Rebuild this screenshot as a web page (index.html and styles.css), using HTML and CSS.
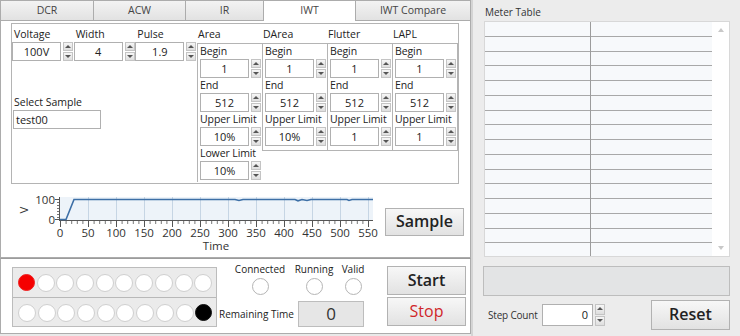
FILE: index.html
```html
<!DOCTYPE html>
<html>
<head>
<meta charset="UTF-8">
<link rel="stylesheet" href="styles.css">
</head>
<body>
<div class="app">
  <div class="left">
    <div class="tabs">
      <div class="tab t-dcr">DCR</div>
      <div class="tab t-acw">ACW</div>
      <div class="tab t-ir">IR</div>
      <div class="tab t-iwt active">IWT</div>
      <div class="tab t-cmp">IWT Compare</div>
    </div>
    <div class="page">
      <div class="params">
        <div class="basic">
          <div class="fields">
            <div class="field">
              <div class="lbl">Voltage</div>
              <div class="num"><div class="box">100V</div><div class="spin"><i class="up"></i><i class="dn"></i></div></div>
            </div>
            <div class="field">
              <div class="lbl">Width</div>
              <div class="num"><div class="box">4</div><div class="spin"><i class="up"></i><i class="dn"></i></div></div>
            </div>
            <div class="field">
              <div class="lbl">Pulse</div>
              <div class="num"><div class="box">1.9</div><div class="spin"><i class="up"></i><i class="dn"></i></div></div>
            </div>
          </div>
          <div class="sample">
            <div class="lbl">Select Sample</div>
            <div class="box text">test00</div>
          </div>
        </div>
        <div class="col col-area">
          <div class="head">Area</div>
          <div class="sub">
            <div class="grp"><div class="lbl">Begin</div><div class="num"><div class="box">1</div><div class="spin"><i class="up"></i><i class="dn"></i></div></div></div>
            <div class="grp"><div class="lbl">End</div><div class="num"><div class="box">512</div><div class="spin"><i class="up"></i><i class="dn"></i></div></div></div>
            <div class="grp"><div class="lbl">Upper Limit</div><div class="num"><div class="box">10%</div><div class="spin"><i class="up"></i><i class="dn"></i></div></div></div>
            <div class="grp"><div class="lbl">Lower Limit</div><div class="num"><div class="box">10%</div><div class="spin"><i class="up"></i><i class="dn"></i></div></div></div>
          </div>
        </div>
        <div class="col">
          <div class="head">DArea</div>
          <div class="sub">
            <div class="grp"><div class="lbl">Begin</div><div class="num"><div class="box">1</div><div class="spin"><i class="up"></i><i class="dn"></i></div></div></div>
            <div class="grp"><div class="lbl">End</div><div class="num"><div class="box">512</div><div class="spin"><i class="up"></i><i class="dn"></i></div></div></div>
            <div class="grp"><div class="lbl">Upper Limit</div><div class="num"><div class="box">10%</div><div class="spin"><i class="up"></i><i class="dn"></i></div></div></div>
          </div>
        </div>
        <div class="col">
          <div class="head">Flutter</div>
          <div class="sub">
            <div class="grp"><div class="lbl">Begin</div><div class="num"><div class="box">1</div><div class="spin"><i class="up"></i><i class="dn"></i></div></div></div>
            <div class="grp"><div class="lbl">End</div><div class="num"><div class="box">512</div><div class="spin"><i class="up"></i><i class="dn"></i></div></div></div>
            <div class="grp"><div class="lbl">Upper Limit</div><div class="num"><div class="box">1</div><div class="spin"><i class="up"></i><i class="dn"></i></div></div></div>
          </div>
        </div>
        <div class="col col-last">
          <div class="head">LAPL</div>
          <div class="sub">
            <div class="grp"><div class="lbl">Begin</div><div class="num"><div class="box">1</div><div class="spin"><i class="up"></i><i class="dn"></i></div></div></div>
            <div class="grp"><div class="lbl">End</div><div class="num"><div class="box">512</div><div class="spin"><i class="up"></i><i class="dn"></i></div></div></div>
            <div class="grp"><div class="lbl">Upper Limit</div><div class="num"><div class="box">1</div><div class="spin"><i class="up"></i><i class="dn"></i></div></div></div>
          </div>
        </div>
      </div>
      <div class="chart-row">
        <svg class="chart" width="369" height="68" viewBox="0 0 369 68">
          <rect x="45" y="9" width="313" height="23" fill="#edf3f9"/>
          <g stroke="#c6d5e4" stroke-width="1">
            <line x1="73.5" y1="9" x2="73.5" y2="32"/><line x1="101.5" y1="9" x2="101.5" y2="32"/>
            <line x1="129.5" y1="9" x2="129.5" y2="32"/><line x1="157.5" y1="9" x2="157.5" y2="32"/>
            <line x1="185.5" y1="9" x2="185.5" y2="32"/><line x1="213.5" y1="9" x2="213.5" y2="32"/>
            <line x1="241.5" y1="9" x2="241.5" y2="32"/><line x1="269.5" y1="9" x2="269.5" y2="32"/>
            <line x1="297.5" y1="9" x2="297.5" y2="32"/><line x1="325.5" y1="9" x2="325.5" y2="32"/>
            <line x1="353.5" y1="9" x2="353.5" y2="32"/>
          </g>
          <g stroke="#555" stroke-width="1">
            <line x1="44" y1="32.5" x2="358" y2="32.5"/>
            <line x1="44.5" y1="9" x2="44.5" y2="33"/>
            <line x1="40" y1="11.5" x2="44" y2="11.5"/>
            <line x1="40" y1="31.5" x2="44" y2="31.5"/>
          </g>
          <path d="M42 14.5h2M42 17.5h2M42 20.5h2M42 23.5h2M42 26.5h2M42 29.5h2" stroke="#777"/>
          <path stroke="#555" d="M45.5 33v6M73.5 33v6M101.5 33v6M129.5 33v6M157.5 33v6M185.5 33v6M213.5 33v6M241.5 33v6M269.5 33v6M297.5 33v6M325.5 33v6M353.5 33v6"/>
          <path stroke="#777" d="M51.1 33v3M56.7 33v3M62.3 33v3M67.9 33v3M79.1 33v3M84.7 33v3M90.3 33v3M95.9 33v3M107.1 33v3M112.7 33v3M118.3 33v3M123.9 33v3M135.1 33v3M140.7 33v3M146.3 33v3M151.9 33v3M163.1 33v3M168.7 33v3M174.3 33v3M179.9 33v3M191.1 33v3M196.7 33v3M202.3 33v3M207.9 33v3M219.1 33v3M224.7 33v3M230.3 33v3M235.9 33v3M247.1 33v3M252.7 33v3M258.3 33v3M263.9 33v3M275.1 33v3M280.7 33v3M286.3 33v3M291.9 33v3M303.1 33v3M308.7 33v3M314.3 33v3M319.9 33v3M331.1 33v3M336.7 33v3M342.3 33v3M347.9 33v3"/>
          <path d="M45 31.5H51L59 11.5H220L224 12.5L228 11.5H280L283 12.8L287 11.5L292 12.5L296 11.5H332L334 12.5L337 11.5H358" fill="none" stroke="#3d6fa6" stroke-width="1.6"/>
          <g class="ax" text-anchor="middle">
            <text x="45" y="49">0</text><text x="73" y="49">50</text><text x="101" y="49">100</text>
            <text x="129" y="49">150</text><text x="157" y="49">200</text><text x="185" y="49">250</text>
            <text x="213" y="49">300</text><text x="241" y="49">350</text><text x="269" y="49">400</text>
            <text x="297" y="49">450</text><text x="325" y="49">500</text><text x="353" y="49">550</text>
            <text x="201" y="62">Time</text>
          </g>
          <g class="ax" text-anchor="end">
            <text x="40" y="15.5">100</text><text x="40" y="35.5">0</text>
          </g>
          <text class="ax" x="0" y="0" text-anchor="middle" transform="translate(13 22) rotate(-90)">V</text>
        </svg>
        <div class="btn btn-sample">Sample</div>
      </div>
    </div>
    <div class="bottom">
      <div class="leds">
        <div class="led-row">
          <span class="led red"></span><span class="led"></span><span class="led"></span><span class="led"></span><span class="led"></span>
          <span class="led"></span><span class="led"></span><span class="led"></span><span class="led"></span><span class="led"></span>
        </div>
        <div class="led-row">
          <span class="led"></span><span class="led"></span><span class="led"></span><span class="led"></span><span class="led"></span>
          <span class="led"></span><span class="led"></span><span class="led"></span><span class="led"></span><span class="led black"></span>
        </div>
      </div>
      <div class="status">
        <div class="inds">
          <div class="ind"><span>Connected</span><i></i></div>
          <div class="ind"><span>Running</span><i></i></div>
          <div class="ind"><span>Valid</span><i></i></div>
        </div>
        <div class="remain"><span>Remaining Time</span><div class="time">0</div></div>
      </div>
      <div class="ctl">
        <div class="btn">Start</div>
        <div class="btn stop">Stop</div>
      </div>
    </div>
  </div>
  <div class="right">
    <div class="rt-title">Meter Table</div>
    <div class="table">
      <div class="cells"></div>
      <div class="scroll"><span class="s-up"></span><span class="s-dn"></span></div>
    </div>
    <div class="msg"></div>
    <div class="foot">
      <span class="step-lbl">Step Count</span>
      <div class="num"><div class="box step">0</div><div class="spin tall"><i class="up"></i><i class="dn"></i></div></div>
      <div class="btn btn-reset">Reset</div>
    </div>
  </div>
</div>
</body>
</html>
```

FILE: styles.css
```css
html, body {
  margin: 0;
  padding: 0;
}
body {
  font-family: "Open Sans", "Noto Sans", sans-serif;
  font-size: 10.5px;
  color: #222;
}
.app {
  display: flex;
  width: 740px;
  height: 336px;
  overflow: hidden;
  background: #e9e9e9;
}

/* left side: tab control + run panel */
.left {
  width: 471px;
  display: flex;
  flex-direction: column;
}
.tabs {
  display: flex;
  height: 20px;
}
.tab {
  box-sizing: border-box;
  height: 20px;
  line-height: 19px;
  text-align: center;
  color: #444;
  border: 1px solid #acacac;
  border-left: none;
  border-bottom: none;
  background: linear-gradient(#f3f3f3, #e2e2e2);
}
.tab:first-child { border-left: 1px solid #acacac; }
.t-dcr { width: 94px; }
.t-acw { width: 92px; }
.t-ir { width: 78px; }
.t-iwt { width: 92px; }
.t-cmp { width: 115px; }
.tab.active {
  background: #fff;
  height: 21px;
  position: relative;
  z-index: 1;
}
.page {
  box-sizing: border-box;
  height: 238px;
  background: #fff;
  border: 1px solid #acacac;
  padding: 2px 0 0 10px;
}
.params {
  box-sizing: border-box;
  display: flex;
  width: 448px;
  height: 161px;
  border: 1px solid #b4b4b4;
}
.basic {
  width: 185px;
}
.fields {
  display: flex;
  padding: 3px 0 0 0;
}
.field {
  width: 63px;
}
.field .lbl {
  padding-left: 2px;
}
.lbl {
  height: 15px;
  line-height: 15px;
  white-space: nowrap;
}
.num {
  display: flex;
  gap: 2px;
}
.box {
  box-sizing: border-box;
  width: 49px;
  height: 19px;
  line-height: 17px;
  border: 1px solid #b0b0b0;
  background: #fff;
  text-align: center;
  font-size: 11px;
}
.spin {
  box-sizing: border-box;
  width: 10px;
  height: 19px;
  display: flex;
  flex-direction: column;
  gap: 1px;
}
.spin i {
  flex: 1;
  position: relative;
  border: 1px solid #c4c4c4;
  background: linear-gradient(#f6f6f6, #dedede);
}
.spin i::after {
  content: "";
  position: absolute;
  left: 1px;
  top: 2px;
  border: 3px solid transparent;
  border-top: none;
  border-bottom: 3px solid #555;
}
.spin i.dn::after {
  border-bottom: none;
  border-top: 3px solid #555;
}
.sample {
  margin-top: 34px;
  padding-left: 1px;
}
.sample .lbl {
  padding-left: 1px;
}
.box.text {
  width: 88px;
  text-align: left;
  padding-left: 2px;
}
.col {
  width: 65px;
}
.head {
  height: 18px;
  line-height: 18px;
  padding: 1px 0 0 1px;
}
.sub {
  border: 1px solid #b4b4b4;
  border-right: none;
  padding: 0 0 4px 2px;
}
.col-last .sub { border-right: 1px solid #b4b4b4; margin-right: -1px; }
.col-area .sub { border-bottom: none; height: 139px; box-sizing: border-box; }
.grp .lbl { padding-left: 0; letter-spacing: -0.1px; }

.chart-row {
  display: flex;
  align-items: flex-start;
  padding-top: 4px;
}
.chart {
  display: block;
  margin-left: 4px;
}
.chart .ax {
  font-family: "Open Sans", "Noto Sans", sans-serif;
  font-size: 11.5px;
  fill: #333;
}
.btn {
  box-sizing: border-box;
  width: 79px;
  border: 1px solid #b2b2b2;
  background: linear-gradient(#f7f7f7, #e2e2e2);
  text-align: center;
  font-size: 16px;
  font-weight: 600;
  color: #222;
}
.btn-sample {
  margin: 20px 0 0 1px;
  height: 28px;
  line-height: 25px;
}

/* run panel */
.bottom {
  box-sizing: border-box;
  flex: 1;
  display: flex;
  align-items: flex-start;
  background: #fff;
  border: 1px solid #acacac;
  border-top-color: #9c9c9c;
  margin-bottom: 2px;
  padding: 8px 0 0 11px;
}
.leds {
  box-sizing: border-box;
  width: 205px;
  height: 60px;
  border: 1px solid #bcbcbc;
  background: #ebebeb;
}
.led-row {
  display: flex;
  align-items: center;
  gap: 1.7px;
  height: 29px;
  padding-left: 5px;
}
.led-row + .led-row {
  border-top: 1px solid #b8b8b8;
}
.led {
  box-sizing: border-box;
  width: 18px;
  height: 18px;
  border-radius: 50%;
  background: #fff;
  border: 1px solid #cfcfcf;
}
.led.red {
  background: #f50000;
  border-color: #f02020;
  width: 17px;
  height: 17px;
}
.led.black {
  background: #000;
  border-color: #111;
  width: 17px;
  height: 17px;
}
.status {
  width: 152px;
  padding-left: 2px;
}
.inds {
  display: grid;
  grid-template-columns: 64px 44px 34px;
  padding-left: 9px;
  margin-top: -5px;
}
.ind {
  display: flex;
  flex-direction: column;
  align-items: center;
  font-size: 10px;
}
.ind span {
  height: 15px;
  line-height: 15px;
}
.ind i {
  box-sizing: border-box;
  width: 17px;
  height: 17px;
  border-radius: 50%;
  border: 1px solid #b5b5b5;
  margin-top: 1px;
  background: #fff;
}
.remain {
  display: flex;
  align-items: center;
  margin-top: 6px;
}
.remain span {
  font-size: 10px;
  width: 79px;
  white-space: nowrap;
}
.time {
  box-sizing: border-box;
  width: 66px;
  height: 26px;
  line-height: 24px;
  border: 1px solid #bdbdbd;
  background: #e6e6e6;
  text-align: center;
  font-size: 17px;
  color: #333;
}
.ctl {
  margin: -1px 0 0 16px;
  display: flex;
  flex-direction: column;
  gap: 2px;
}
.ctl .btn {
  height: 29px;
  line-height: 27px;
}
.btn.stop {
  color: #d0262a;
  font-weight: 500;
}

/* right side: meter table */
.right {
  box-sizing: border-box;
  flex: 1;
  border-left: 2px solid #d4d4d4;
  padding: 5px 0 0 11px;
  background: #ececec;
}
.rt-title {
  height: 15px;
  line-height: 15px;
  font-size: 10px;
  color: #333;
  padding-left: 1px;
}
.table {
  box-sizing: border-box;
  display: flex;
  width: 246px;
  height: 236px;
  margin: 1px 0 0 0;
  border: 1px solid #d8d8d8;
  background: #fff;
}
.cells {
  flex: 1;
  background:
    linear-gradient(90deg, transparent 105px, #9c9c9c 105px, #9c9c9c 106px, transparent 106px),
    repeating-linear-gradient(#f7f9fb 0, #f7f9fb 13.75px, #a8a8a8 13.75px, #a8a8a8 14.75px);
  background-position: 0 0, 0 0;
}
.scroll {
  width: 17px;
  position: relative;
  background: #fff;
}
.s-up, .s-dn {
  position: absolute;
  left: 6px;
  border: 3px solid transparent;
}
.s-up { top: 6px; border-top: none; border-bottom: 4px solid #c8c8c8; }
.s-dn { bottom: 6px; border-bottom: none; border-top: 4px solid #c8c8c8; }
.msg {
  box-sizing: border-box;
  width: 247px;
  height: 30px;
  margin: 9px 0 0 -1px;
  border: 1px solid #bdbdbd;
  background: #e3e4e5;
}
.foot {
  display: flex;
  align-items: center;
  margin-top: 4px;
}
.step-lbl {
  font-size: 10px;
  width: 54px;
  padding-left: 4px;
  color: #333;
  letter-spacing: -0.2px;
}
.box.step {
  width: 51px;
  height: 22px;
  line-height: 20px;
  text-align: right;
  padding-right: 4px;
  font-size: 11px;
}
.spin.tall { height: 22px; }
.btn-reset {
  margin-left: 46px;
  height: 30px;
  line-height: 27px;
}
```
